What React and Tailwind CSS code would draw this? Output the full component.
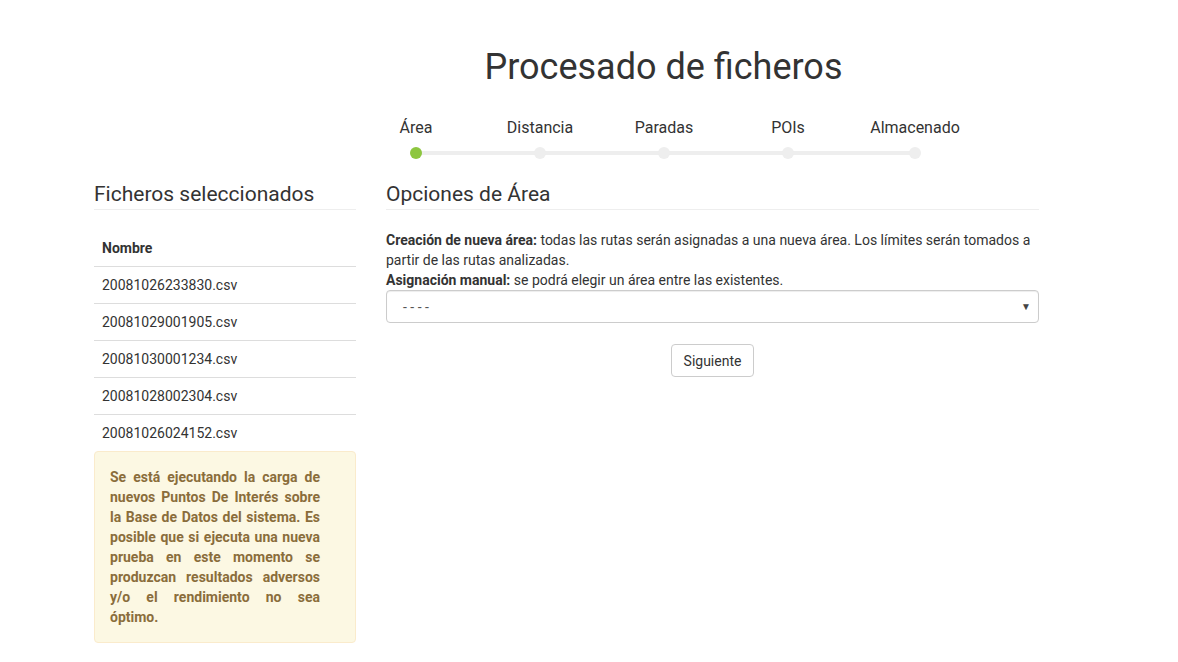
const steps = ["Área", "Distancia", "Paradas", "POIs", "Almacenado"]

const files = [
  "20081026233830.csv",
  "20081029001905.csv",
  "20081030001234.csv",
  "20081028002304.csv",
  "20081026024152.csv",
]

function Stepper({ current }) {
  return (
    <div className="mt-[30px] flex pl-[354px]">
      {steps.map((step, i) => (
        <div key={step} className={"w-[124px]" + (i === steps.length - 1 ? " ml-[3px]" : "")}>
          <p className="text-center text-[16px] leading-[22px] text-[#333]">{step}</p>
          <div className="relative mt-[8px] flex h-[12px] justify-center">
            {i < steps.length - 1 && (
              <div className="absolute left-1/2 top-[4px] h-[4px] w-full bg-[#eeeeee]" />
            )}
            <div
              className={
                "relative h-[12px] w-[12px] rounded-full " +
                (i === current ? "bg-[#8dc63f]" : "bg-[#eeeeee]")
              }
            />
          </div>
        </div>
      ))}
    </div>
  )
}

function SectionTitle({ children }) {
  return (
    <h3 className="mb-[20px] border-b border-[#eeeeee] pb-[4px] text-[21px] leading-[22px] text-[#333]">
      {children}
    </h3>
  )
}

export default function App() {
  return (
    <div
      className="min-h-[662px] w-[1178px] bg-white text-[14px] leading-[20px] text-[#333]"
      style={{ fontFamily: "Roboto, 'Liberation Sans', sans-serif" }}
    >
      <div className="pl-[149px] pt-[47px] text-center">
        <h1 className="text-[36px] leading-[40px] text-[#333]">Procesado de ficheros</h1>
      </div>

      <Stepper current={0} />

      <div className="mt-[24px] flex gap-[30px] pl-[94px]">
        <div className="w-[262px]">
          <SectionTitle>Ficheros seleccionados</SectionTitle>
          <table className="w-full border-collapse">
            <thead>
              <tr className="border-b border-[#dddddd]">
                <th className="px-[8px] py-[8px] text-left font-bold">Nombre</th>
              </tr>
            </thead>
            <tbody>
              {files.map((f, i) => (
                <tr
                  key={f}
                  className={i < files.length - 1 ? "border-b border-[#dddddd]" : ""}
                >
                  <td className="px-[8px] py-[8px]">{f}</td>
                </tr>
              ))}
            </tbody>
          </table>
          <div className="rounded-[4px] border border-[#faebcc] bg-[#fcf8e3] py-[15px] pl-[15px] pr-[35px] text-justify font-bold text-[#8a6d3b]">
            Se está ejecutando la carga de nuevos Puntos De Interés sobre la Base de Datos
            del sistema. Es posible que si ejecuta una nueva prueba en este momento se
            produzcan resultados adversos y/o el rendimiento no sea óptimo.
          </div>
        </div>

        <div className="w-[653px]">
          <SectionTitle>Opciones de Área</SectionTitle>
          <p className="mt-[20px]">
            <b>Creación de nueva área:</b> todas las rutas serán asignadas a una nueva área.
            Los límites serán tomados a partir de las rutas analizadas.
            <br />
            <b>Asignación manual:</b> se podrá elegir un área entre las existentes.
          </p>
          <div className="flex h-[33px] items-center justify-between rounded-[4px] border border-[#cccccc] bg-white pl-[16px] pr-[7px] shadow-[inset_0_1px_1px_rgba(0,0,0,0.075)]">
            <span className="text-[#555555]">- - - -</span>
            <span className="text-[10px] text-[#444]">▼</span>
          </div>
          <div className="mt-[21px] flex justify-center">
            <button className="h-[33px] rounded-[4px] border border-[#cccccc] bg-white px-[12px] text-[14px] text-[#333]">
              Siguiente
            </button>
          </div>
        </div>
      </div>
    </div>
  )
}
